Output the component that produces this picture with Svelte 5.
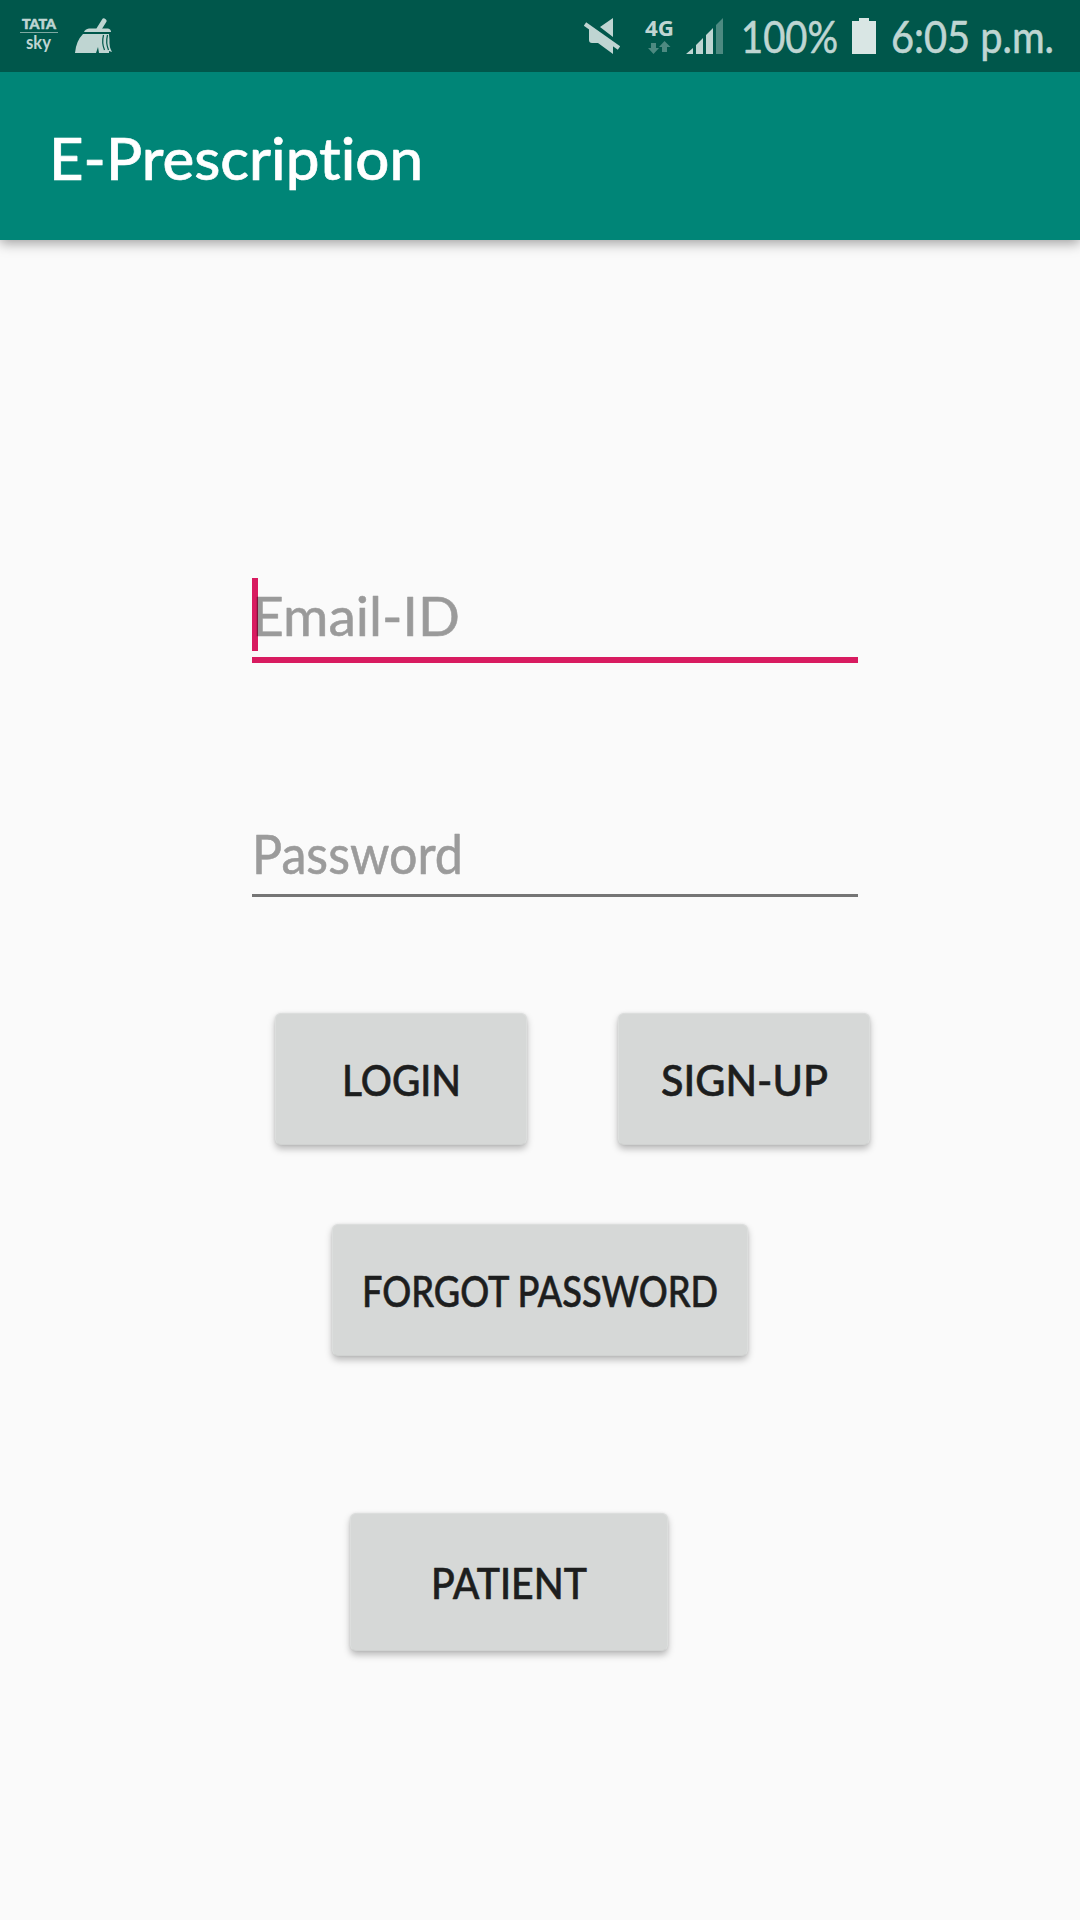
<script>
  // Each label is fitted to a fixed run length so the lettering keeps its narrow, hand-drawn rhythm.
</script>

{#snippet label(text, width, size, height, baseline)}
  <svg class="label" {width} {height} viewBox="0 0 {width} {height}">
    <text x="0" y={baseline} font-size={size} textLength={width} lengthAdjust="spacingAndGlyphs">{text}</text>
  </svg>
{/snippet}

<div class="screen">
  <div class="status">
    <svg class="tata" width="38" height="36" viewBox="0 0 38 36">
      <text class="brand" x="2" y="10.500" font-size="12.500" font-weight="900" textLength="34" lengthAdjust="spacingAndGlyphs">TATA</text>
      <path d="M0 14.500H38" stroke="#7fa9a2" stroke-width="1" />
      <text x="6" y="31" font-size="18" font-weight="700" textLength="25" lengthAdjust="spacingAndGlyphs">sky</text>
    </svg>
    <svg class="broom" width="38" height="36" viewBox="0 0 38 36">
      <path d="M24 11L29 3" stroke-width="5" stroke-linecap="round" />
      <path d="M9 14Q10 11 14 10.500H33Q36 11 36 14Z" />
      <path d="M8 16H34L34.500 22Q34 29 37 34L34 33V35H24L23 29L21 35H0Q1 23 8 16Z" />
      <path class="cut" d="M28.500 17Q26.500 25 29.500 32M32.500 17Q30.500 25 33.500 32" />
    </svg>
    <span class="spacer"></span>
    <svg class="mute" width="37" height="36" viewBox="0 0 37 36">
      <path d="M16 9L29 0V19ZM5 9L29 26V36L14 25H8Q5 25 5 22Z" />
      <path d="M1 6L35 30" class="slash" />
    </svg>
    <svg class="network" width="30" height="36" viewBox="0 0 30 36">
      <text x="0" y="18" font-size="22" font-weight="700" textLength="29" lengthAdjust="spacingAndGlyphs">4G</text>
      <path class="dim" d="M6 25H11V30H14L8.500 36L3 30H6ZM17 34H22V29H25.500L19.500 23L14 29H17Z" />
    </svg>
    <svg class="signal" width="37" height="36" viewBox="0 0 37 36">
      <path d="M0 36L7 30V36ZM10 27L17 20V36H10ZM20 17L27 10V36H20Z" />
      <path class="dim" d="M30 7L37 0V36H30Z" />
    </svg>
    <span class="percent">{@render label("100%", 97, 45, 54, 43)}</span>
    <svg class="battery" width="24" height="36" viewBox="0 0 24 36">
      <path d="M7 0H17V3H24V36H0V3H7Z" />
    </svg>
    <span class="clock">{@render label("6:05 p.m.", 163, 44, 54, 43)}</span>
  </div>

  <header class="appbar">{@render label("E-Prescription", 374, 58, 80, 62)}</header>

  <main>
    <div class="field active">
      <span class="cursor"></span>
      {@render label("Email-ID", 208, 54, 79, 58)}
    </div>
    <div class="field">{@render label("Password", 211, 54, 79, 62)}</div>

    <div class="pair">
      <button>{@render label("LOGIN", 119, 42, 60, 46.5)}</button>
      <button>{@render label("SIGN-UP", 167, 42, 60, 46.5)}</button>
    </div>
    <button class="forgot">{@render label("FORGOT PASSWORD", 356, 42, 60, 46.5)}</button>
    <button class="patient">{@render label("PATIENT", 156, 42, 60, 46.5)}</button>
  </main>
</div>

<style>
  :global(body) {
    margin: 0;
    background: #fafafa;
  }
  .screen {
    width: 1080px;
    height: 1920px;
    display: flex;
    flex-direction: column;
    background: #fafafa;
    font-family: Lato, "Open Sans", sans-serif;
    font-variant-ligatures: none;
    overflow: hidden;
  }
  svg {
    display: block;
    flex: none;
    overflow: visible;
    fill: currentColor;
  }
  .label text {
    stroke: currentColor;
    stroke-width: 0.6;
    stroke-linejoin: round;
  }
  .status {
    position: relative;
    z-index: 1;
    height: 72px;
    box-sizing: border-box;
    padding: 0 26px 0 20px;
    display: flex;
    align-items: center;
    flex: none;
    background: #00574b;
    color: #bfd5d2;
  }
  .brand {
    stroke: currentColor;
    stroke-width: 0.5;
  }
  .broom {
    margin-left: 17px;
    stroke: currentColor;
    stroke-width: 0;
  }
  .broom .cut {
    fill: none;
    stroke: #00574b;
    stroke-width: 1.2;
  }
  .spacer {
    flex: 1;
  }
  .mute {
    margin-right: 1px;
  }
  .slash {
    fill: none;
    stroke: #bfd5d2;
    stroke-width: 4;
  }
  .dim {
    fill: #4d8a81;
  }
  .network {
    margin-left: 23px;
    font-family: "Open Sans", sans-serif;
  }
  .signal {
    margin-left: 11px;
  }
  .percent {
    margin-left: 18px;
  }
  .battery {
    margin-left: 14px;
    color: #d9e6e4;
  }
  .clock {
    margin-left: 15px;
  }
  .percent,
  .clock {
    padding-top: 2px;
  }
  .appbar {
    height: 168px;
    box-sizing: border-box;
    padding: 46px 0 0 49px;
    flex: none;
    background: #008577;
    color: #fff;
    font-weight: 500;
    box-shadow: 0 3px 12px rgba(0, 0, 0, 0.38);
  }
  main {
    padding: 338px 0 0 252px;
    display: flex;
    flex-direction: column;
    align-items: flex-start;
  }
  .field {
    position: relative;
    width: 606px;
    height: 85px;
    box-sizing: border-box;
    border-bottom: 3px solid #757575;
    color: #9b9b9b;
  }
  .field + .field {
    margin-top: 149px;
  }
  .field.active {
    border-bottom: 6px solid #d81b60;
  }
  .cursor {
    position: absolute;
    left: 0;
    top: 0;
    width: 6px;
    height: 73px;
    background: #d81b60;
  }
  /* The hint is translucent black so that it darkens the caret it overlaps. */
  .field.active .label {
    position: relative;
    color: #000;
    opacity: 0.38;
  }
  .pair {
    display: flex;
    gap: 91px;
    margin: 116px 0 0 23px;
  }
  button {
    width: 252px;
    height: 132px;
    padding: 0;
    box-sizing: border-box;
    border: 1px solid #dcdedd;
    border-bottom-color: #d0d2d1;
    border-radius: 6px;
    display: flex;
    align-items: center;
    justify-content: center;
    background: #d6d8d7;
    color: #1d1e1e;
    font-family: inherit;
    font-weight: 500;
    box-shadow: 0 4px 7px rgba(0, 0, 0, 0.26), 0 0 3px rgba(0, 0, 0, 0.08);
  }
  .forgot {
    width: 416px;
    margin: 79px 0 0 80px;
  }
  .patient {
    width: 318px;
    height: 138px;
    margin: 157px 0 0 98px;
  }
</style>
